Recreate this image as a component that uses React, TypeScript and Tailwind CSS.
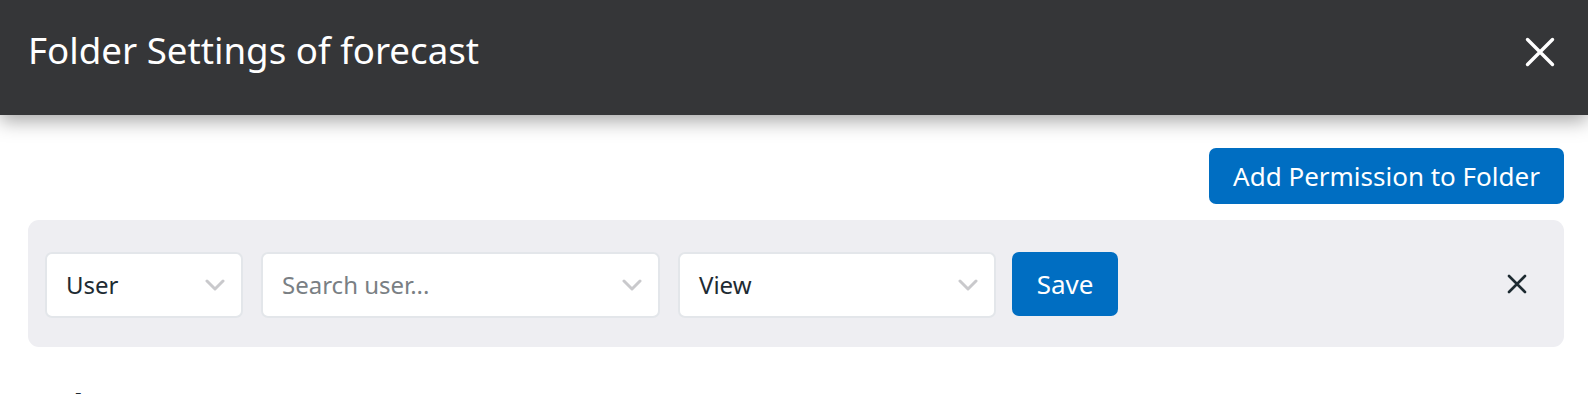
import React from 'react'

const FONT = { fontFamily: '"Noto Sans", "Open Sans", sans-serif' }

function Chevron() {
  return (
    <svg width="20" height="12" viewBox="0 0 20 12" fill="none" className="shrink-0">
      <path d="M2 2 L10 10 L18 2" stroke="#c9c9cc" strokeWidth="3" strokeLinecap="round" strokeLinejoin="round" />
    </svg>
  )
}

function SelectBox({ label, placeholder, width }: { label: string; placeholder?: boolean; width: string }) {
  return (
    <div
      className={`${width} h-[66px] flex items-center justify-between pl-[19px] pr-[16px] bg-white border-2 border-[#e3e6ea] rounded-[7px]`}
    >
      <span className={`text-[24px] ${placeholder ? 'text-[#7a7f84]' : 'text-[#1e2b33]'}`}>{label}</span>
      <Chevron />
    </div>
  )
}

export default function App() {
  return (
    <div className="w-full min-h-screen bg-white overflow-hidden" style={FONT}>
      {/* Header */}
      <div className="relative z-10 h-[115px] bg-[#353638] flex items-start justify-between pl-[28px] pr-[33px] pt-[26px] shadow-[0_6px_18px_rgba(0,0,0,0.35)]">
        <h1 className="text-[36.7px] leading-[49px] text-white">Folder Settings of forecast</h1>
        <button type="button" aria-label="Close" className="mt-[11px]">
          <svg width="30" height="30" viewBox="0 0 30 30" fill="none">
            <path d="M2.5 2.5 L27.5 27.5 M27.5 2.5 L2.5 27.5" stroke="#ffffff" strokeWidth="3.4" strokeLinecap="round" />
          </svg>
        </button>
      </div>

      <div className="pl-[28px] pr-[24px]">
        <div className="flex justify-end mt-[33px]">
          <button
            type="button"
            className="h-[56px] w-[355px] rounded-[7px] bg-[#006ec2] text-white text-[26px]"
          >
            Add Permission to Folder
          </button>
        </div>

        {/* Permission row */}
        <div className="mt-[16px] h-[127px] bg-[#eeeef2] rounded-[11px] flex items-start pl-[17px] pr-[37px] pt-[32px]">
          <div className="flex items-start gap-[18px]">
            <SelectBox label="User" width="w-[198px]" />
            <SelectBox label="Search user..." placeholder width="w-[399px]" />
            <SelectBox label="View" width="w-[318px]" />
            <button
              type="button"
              className="-ml-[2px] h-[64px] w-[106px] rounded-[7px] bg-[#006ec2] text-white text-[26px]"
            >
              Save
            </button>
          </div>
          <button type="button" aria-label="Remove" className="ml-auto mt-[22px]">
            <svg width="20" height="20" viewBox="0 0 20 20" fill="none">
              <path d="M2 2 L18 18 M18 2 L2 18" stroke="#1d2a31" strokeWidth="2.6" strokeLinecap="round" />
            </svg>
          </button>
        </div>

        <h3 className="mt-[36px] ml-[42px] text-[24px] font-bold text-[#1e2b33]">Access</h3>
      </div>
    </div>
  )
}
